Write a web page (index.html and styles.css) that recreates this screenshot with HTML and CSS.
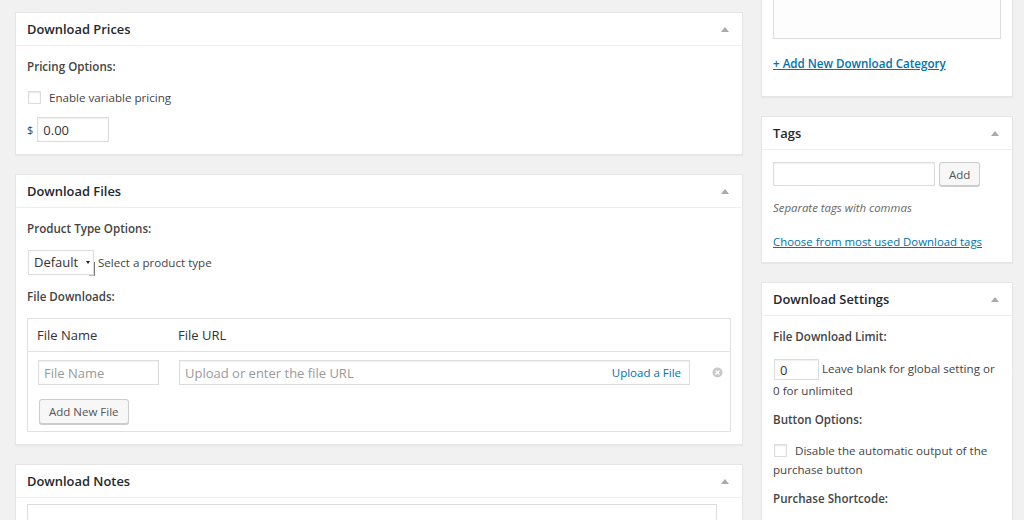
FILE: index.html
```html
<!DOCTYPE html>
<html lang="en">
<head>
    <meta charset="UTF-8">
    <meta name="viewport" content="width=device-width, initial-scale=1.0">
    <title>Edit Download</title>
    <link rel="stylesheet" href="styles.css">
</head>
<body>

<div class="page">

    <!-- Main column -->
    <div class="main-col">

        <!-- Download Prices -->
        <div class="postbox">
            <div class="hndle"><span>Download Prices</span><span class="toggle"></span></div>
            <div class="inside">
                <p class="label">Pricing Options:</p>
                <label class="check-row"><input type="checkbox" class="checkbox">Enable variable pricing</label>
                <div class="price-row">
                    <span class="currency">$</span>
                    <input type="text" class="text-input price-input" value="0.00">
                </div>
            </div>
        </div>

        <!-- Download Files -->
        <div class="postbox">
            <div class="hndle"><span>Download Files</span><span class="toggle"></span></div>
            <div class="inside">
                <p class="label">Product Type Options:</p>
                <div class="type-row">
                    <div class="select">Default<span class="select-arrow"></span></div>
                    <span>Select a product type</span>
                </div>
                <p class="label">File Downloads:</p>

                <div class="files-table">
                    <div class="files-head">
                        <span class="col-name">File Name</span>
                        <span>File URL</span>
                    </div>
                    <div class="files-body">
                        <div class="file-row">
                            <input type="text" class="text-input name-input" placeholder="File Name">
                            <div class="url-field">
                                <input type="text" class="text-input url-input" placeholder="Upload or enter the file URL">
                                <a href="#" class="upload-link">Upload a File</a>
                            </div>
                            <svg class="remove-icon" width="11" height="11" viewBox="0 0 11 11">
                                <circle cx="5.5" cy="5.5" r="5" fill="#c8c8c8"/>
                                <path d="M3.5 3.5 L7.5 7.5 M7.5 3.5 L3.5 7.5" stroke="#fff" stroke-width="1.4"/>
                            </svg>
                        </div>
                        <button class="button">Add New File</button>
                    </div>
                </div>
            </div>
        </div>

        <!-- Download Notes -->
        <div class="postbox">
            <div class="hndle"><span>Download Notes</span><span class="toggle"></span></div>
            <div class="inside notes-inside">
                <textarea class="notes"></textarea>
            </div>
        </div>

    </div>

    <!-- Sidebar -->
    <div class="side-col">

        <div class="postbox">
            <div class="inside cat-inside">
                <div class="cat-list"></div>
                <a href="#" class="add-cat">+ Add New Download Category</a>
            </div>
        </div>

        <div class="postbox">
            <div class="hndle"><span>Tags</span><span class="toggle"></span></div>
            <div class="inside tags-inside">
                <div class="tag-row">
                    <input type="text" class="text-input tag-input">
                    <button class="button">Add</button>
                </div>
                <p class="howto">Separate tags with commas</p>
                <p class="tag-cloud"><a href="#" class="tag-link">Choose from most used Download tags</a></p>
            </div>
        </div>

        <div class="postbox">
            <div class="hndle"><span>Download Settings</span><span class="toggle"></span></div>
            <div class="inside">
                <p class="label">File Download Limit:</p>
                <p class="limit-text"><input type="text" class="text-input limit-input" value="0"> Leave blank for global setting or 0 for unlimited</p>
                <p class="label">Button Options:</p>
                <p class="disable-text"><input type="checkbox" class="checkbox">Disable the automatic output of the purchase button</p>
                <p class="label">Purchase Shortcode:</p>
                <input type="text" class="text-input shortcode-input">
            </div>
        </div>

    </div>

</div>

</body>
</html>
```

FILE: styles.css
```css
html, body {
    overflow: hidden;
}

body {
    margin: 0;
    background-color: #f1f1f1;
    font-family: "Open Sans", "Liberation Sans", sans-serif;
    font-size: 11.6px;
    line-height: 19px;
    color: #444;
}

.page {
    display: flex;
    align-items: flex-start;
    gap: 18px;
    padding: 12px 11px 0 15px;
}

.main-col {
    width: 728px;
    flex-shrink: 0;
}

.side-col {
    width: 252px;
    flex-shrink: 0;
    margin-top: -46px;
}

/* Boxes */
.postbox {
    background-color: #fff;
    border: 1px solid #e5e5e5;
    box-shadow: 0 1px 1px rgba(0, 0, 0, 0.04);
    margin-bottom: 19px;
}

.hndle {
    display: flex;
    justify-content: space-between;
    align-items: center;
    padding: 7px 12px 7px 11px;
    line-height: 18px;
    border-bottom: 1px solid #eee;
    font-size: 12.9px;
    font-weight: 600;
    color: #23282d;
}

.toggle {
    width: 0;
    height: 0;
    border-left: 4px solid transparent;
    border-right: 4px solid transparent;
    border-bottom: 5px solid #aaa;
    margin-right: 1px;
}

.inside {
    padding: 11px 11px 12px 11px;
}

.label {
    margin: 0 0 12px;
    font-weight: 600;
    color: #444;
}

/* Inputs */
.text-input {
    box-sizing: border-box;
    height: 25px;
    border: 1px solid #ddd;
    box-shadow: inset 0 1px 2px rgba(0, 0, 0, 0.07);
    padding: 2px 5px;
    font-family: inherit;
    font-size: 13px;
    color: #333;
    background-color: #fff;
    outline: none;
}

.text-input::placeholder {
    color: #9a9a9a;
}

.checkbox {
    appearance: none;
    -webkit-appearance: none;
    box-sizing: border-box;
    width: 13px;
    height: 13px;
    margin: 0 8px 0 1px;
    border: 1px solid #ddd;
    box-shadow: inset 0 1px 2px rgba(0, 0, 0, 0.1);
    background-color: #fff;
    vertical-align: -2px;
}

.button {
    box-sizing: border-box;
    height: 25px;
    padding: 0 9px;
    background-color: #f7f7f7;
    border: 1px solid #ccc;
    border-radius: 3px;
    box-shadow: 0 1px 0 #ccc;
    font-family: inherit;
    font-size: 11.5px;
    color: #555;
    cursor: pointer;
}

/* Download Prices */
.check-row {
    display: block;
    margin-bottom: 10px;
}

.price-row {
    display: flex;
    align-items: center;
    gap: 4px;
}

.currency {
    font-size: 11px;
}

.price-input {
    width: 72px;
}

/* Download Files */
.type-row {
    display: flex;
    align-items: center;
    gap: 4px;
    margin: 0 0 12px 1px;
}

.select {
    position: relative;
    box-sizing: border-box;
    width: 66px;
    height: 25px;
    line-height: 23px;
    padding-left: 5px;
    border: 1px solid #ddd;
    color: #333;
    font-size: 13px;
}

.select-arrow {
    position: absolute;
    right: 3px;
    top: 10px;
    width: 0;
    height: 0;
    border-left: 2.5px solid transparent;
    border-right: 2.5px solid transparent;
    border-top: 3px solid #222;
}

.select::after {
    content: "";
    position: absolute;
    right: -2px;
    top: 11px;
    width: 5px;
    height: 13px;
    border-right: 1px solid #777;
    border-bottom: 1px solid #bbb;
}

.files-table {
    border: 1px solid #e1e1e1;
}

.files-head {
    display: flex;
    padding: 0 9px;
    height: 32px;
    line-height: 32px;
    border-bottom: 1px solid #e1e1e1;
    font-size: 13px;
    color: #333;
}

.col-name {
    width: 141px;
}

.files-body {
    padding: 8px 6px 7px 10px;
}

.file-row {
    display: flex;
    align-items: center;
    margin-bottom: 14px;
}

.file-row > * {
    flex-shrink: 0;
}

.name-input {
    width: 121px;
    margin-right: 20px;
}

.url-field {
    position: relative;
    width: 511px;
}

.url-input {
    width: 100%;
}

.upload-link {
    position: absolute;
    right: 9px;
    top: 3px;
    color: #0073aa;
    text-decoration: none;
    font-size: 11.5px;
}

.remove-icon {
    margin-left: 22px;
}

.files-body .button {
    margin-left: 1px;
    padding: 0 9px;
}

/* Download Notes */
.notes-inside {
    padding-top: 6px;
}

.notes {
    display: block;
    box-sizing: border-box;
    width: 690px;
    height: 120px;
    border: 1px solid #ddd;
    resize: none;
}

/* Sidebar */
.cat-inside {
    padding-bottom: 23px;
}

.cat-list {
    height: 61px;
    border: 1px solid #ddd;
    background-color: #fdfdfd;
    box-sizing: border-box;
    margin-bottom: 15px;
}

.add-cat {
    display: block;
    color: #0073aa;
    font-weight: 600;
    text-decoration: underline;
}

.tags-inside {
    padding: 12px 11px 11px;
}

.tag-row {
    display: flex;
    gap: 4px;
    margin-bottom: 12px;
}

.tag-input {
    width: 162px;
    height: 24px;
}

.tag-row .button {
    height: 24px;
    padding: 0 9px;
}

.howto {
    margin: 0 0 15px;
    font-style: italic;
    font-size: 11.4px;
    color: #666;
}

.tag-cloud {
    margin: 0;
}

.tag-link {
    color: #0073aa;
    text-decoration: underline;
    font-size: 11.4px;
}

.limit-text {
    margin: 0 0 8px;
    line-height: 22px;
}

.limit-input {
    width: 45px;
    height: 21px;
    margin-left: 1px;
    vertical-align: middle;
}

.disable-text {
    margin: 0 0 10px;
}

.shortcode-input {
    width: 100%;
}
```
